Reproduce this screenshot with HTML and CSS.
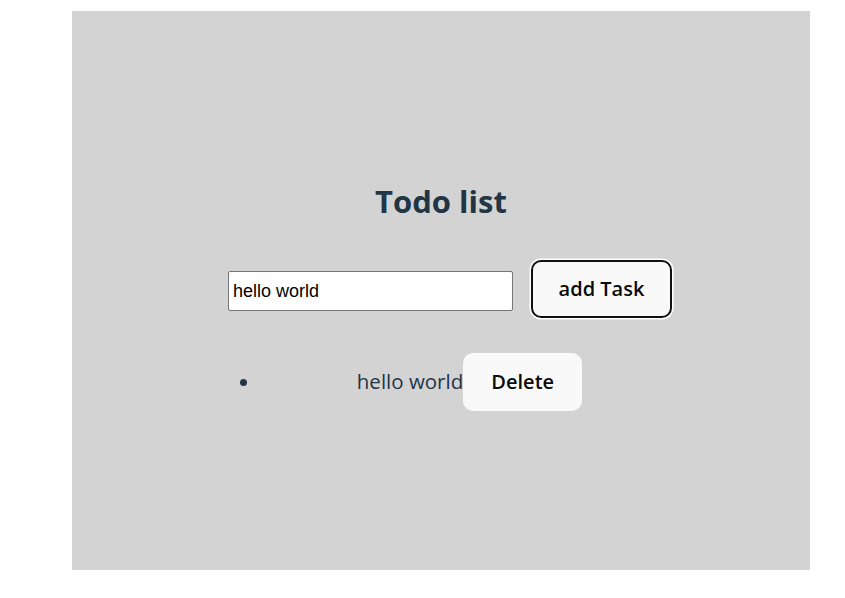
FILE: index.html
```html
<!DOCTYPE html>
<html lang="en">
<head>
<meta charset="utf-8">
<title>Todo list</title>
<link rel="stylesheet" href="styles.css">
</head>
<body>
<div class="app">
  <h1 class="title">Todo list</h1>
  <div class="row">
    <input class="task-input" type="text" value="hello world">
    <button class="btn btn-add">add Task</button>
  </div>
  <ul class="list">
    <li class="item"><span class="item-text">hello world</span><button class="btn btn-delete">Delete</button></li>
  </ul>
</div>
</body>
</html>
```

FILE: styles.css
```css
html, body {
  margin: 0;
  background: #ffffff;
}

body {
  font-family: "Open Sans", "Noto Sans", sans-serif;
  color: #213547;
}

.app {
  box-sizing: border-box;
  width: 738px;
  height: 559px;
  margin: 11px 0 0 72px;
  background: #d3d3d3;
  padding-top: 170px;
  display: flex;
  flex-direction: column;
  align-items: flex-start;
}

.title {
  align-self: center;
  margin: 0;
  font-size: 31px;
  line-height: 40px;
  font-weight: 700;
  color: #213547;
}

.row {
  display: flex;
  align-items: center;
  gap: 18px;
  margin: 39px 0 0 156px;
}

.task-input {
  box-sizing: border-box;
  width: 285px;
  height: 40px;
  margin: 4px 0 0 0;
  padding: 0 4px;
  border: 1px solid #767676;
  border-radius: 2px;
  background: #ffffff;
  font-family: "Liberation Sans", Arial, sans-serif;
  font-size: 18px;
  color: #000000;
}

.btn {
  font-family: "Open Sans", "Noto Sans", sans-serif;
  font-size: 20px;
  font-weight: 600;
  line-height: 28px;
  background: #f9f9f9;
  color: #0a0a0a;
  border-radius: 10px;
  cursor: pointer;
}

.btn-add {
  box-sizing: border-box;
  width: 141px;
  height: 58px;
  padding: 0;
  border: 2.5px solid #111111;
  box-shadow: 0 0 0 1.5px #ffffff;
}

.btn-delete {
  box-sizing: border-box;
  width: 119px;
  height: 58px;
  padding: 0;
  border: 1px solid transparent;
  vertical-align: baseline;
}

.list {
  width: 417px;
  margin: 35px 0 0 189px;
  padding: 0;
  list-style: disc;
}

.item {
  text-align: center;
  font-size: 20.5px;
  line-height: 28px;
  color: #213547;
}

.item-text {
  color: #213547;
}
```
